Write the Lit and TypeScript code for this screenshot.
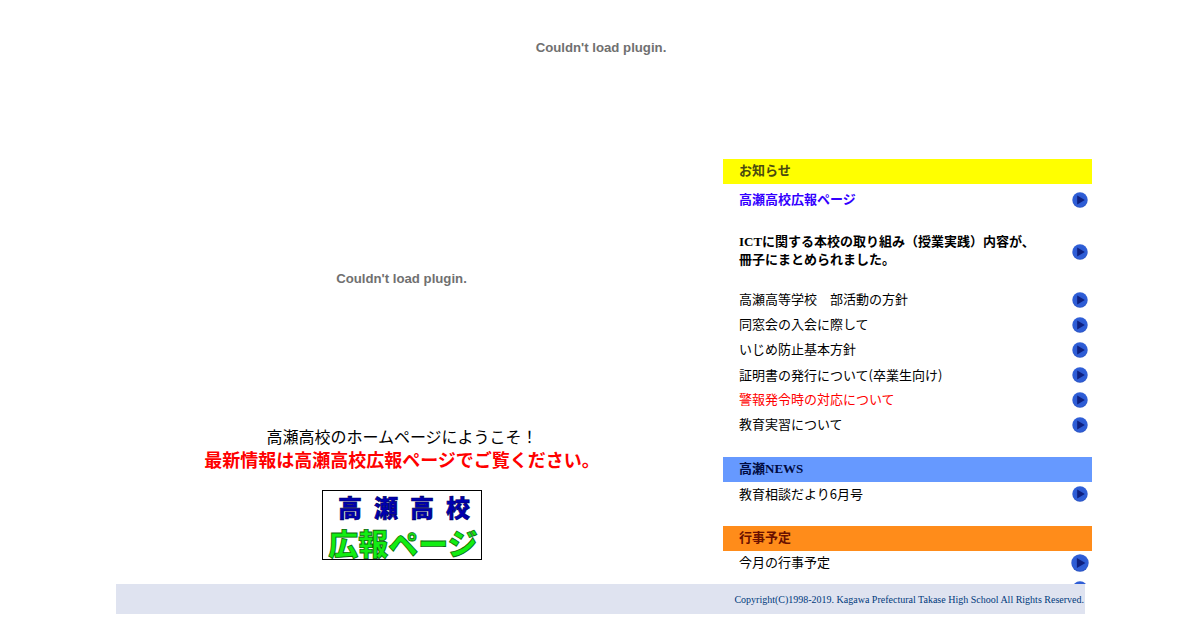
import { LitElement, html, css, svg } from "lit";
import { customElement } from "lit/decorators.js";

let uid = 0;
const arrow = (big = false) => {
  const id = `g${uid++}`;
  const s = big ? 18 : 16;
  return html`<svg class="arrow" width=${s} height=${s} viewBox="0 0 16 16" aria-hidden="true">
    ${svg`<defs><radialGradient id=${id} cx="50%" cy="45%" r="58%">
      <stop offset="0" stop-color="#2a56cc"/><stop offset="0.75" stop-color="#2f5fd8"/><stop offset="1" stop-color="#2a50ba"/>
    </radialGradient></defs>
    <circle cx="8" cy="8" r="7.7" fill="url(#${id})"/>
    <path d="M5.2 3.6 L12.8 8 L5.2 12.4 Z" fill="#0e2080"/>`}
  </svg>`;
};

@customElement("app-root")
export class AppRoot extends LitElement {
  static styles = css`
    :host { display: block; width: 1200px; height: 630px; overflow: hidden; background: #fff;
      font-family: "Liberation Serif", "Noto Sans CJK JP", serif; font-size: 13px; color: #000; }
    .page { display: flex; flex-direction: column; padding-left: 116px; }
    .plugin { display: flex; align-items: center; justify-content: center; box-sizing: border-box; padding-left: 1px;
      font-family: "Liberation Sans", sans-serif; font-weight: 700; font-size: 13.2px; color: #707070; }
    .top { width: 969px; height: 159px; align-items: flex-start; }
    .top span { margin-top: 40px; line-height: 16px; }
    .main { display: flex; gap: 37px; height: 425px; width: 976px; }
    .left { width: 570px; flex: none; display: flex; flex-direction: column; align-items: center; }
    .left .plugin { height: 238px; width: 100%; }
    .welcome { margin-top: 29px; font-size: 16px; line-height: 23px; text-align: center; padding-left: 2px; }
    .notice { margin-top: 1px; padding-left: 2px; font-size: 18px; font-weight: 700; color: #f00; line-height: 23px; text-align: center; }
    .banner { margin-top: 17px; margin-left: 2px; width: 160px; height: 70px; box-sizing: border-box; border: 1px solid #000;
      display: flex; flex-direction: column; align-items: center;
      font-family: "Noto Sans CJK JP", sans-serif; font-weight: 900; background: #fff; }
    .b1 { font-size: 24px; line-height: 32px; letter-spacing: 12px; margin: 0 -12px 0 4px; white-space: nowrap; color: #0000b0;
      -webkit-text-stroke: 0.6px #00005a; }
    .b2 { font-size: 30px; line-height: 34px; margin-top: 2px; margin-left: 2px; color: #12ee12; -webkit-text-stroke: 0.8px #0a6a0a; white-space: nowrap; }
    .right { width: 369px; flex: none; height: 425px; overflow: hidden; }
    .head { height: 25px; line-height: 24px; padding-left: 16px; font-weight: 700; }
    .yellow { background: #ffff00; color: #4a4a10; }
    .blue { background: #6699ff; color: #000a40; }
    .orange { background: #ff8c1a; color: #6a1000; }
    .row { display: flex; align-items: center; justify-content: space-between; box-sizing: border-box;
      height: 25px; padding: 0 4px 0 16px; line-height: 18px; }
    .row.first { margin-top: 3px; }
    .row.tall { height: 36px; margin-top: 22px; margin-bottom: 17px; }
    .row.tall span { margin-top: -2px; }
    .row.icon-only { justify-content: flex-end; }
    .sans { font-family: "Noto Sans CJK JP", "Liberation Sans", sans-serif; }
    .link { color: #3300ff; font-weight: 700; }
    .strong { font-weight: 700; }
    .red { color: #f00; }
    .arrow { flex: none; display: block; }
    .group { margin-bottom: 20px; }
    .group.news { margin-bottom: 19px; }
    .group.news span { margin-top: -1px; }
    .row.lift { padding-bottom: 1px; }
    .row.bigicon { padding-right: 3px; }
    .footer { width: 969px; height: 30px; background: #dfe3f0; color: #003a7c; font-size: 10px;
      display: flex; align-items: center; justify-content: flex-end; padding-right: 1px; box-sizing: border-box; }
  `;

  render() {
    const rows: [string, string][] = [
      ["高瀬高等学校　部活動の方針", ""],
      ["同窓会の入会に際して", ""],
      ["いじめ防止基本方針", ""],
      ["証明書の発行について(卒業生向け)", "sans"],
      ["警報発令時の対応について", "red"],
      ["教育実習について", ""],
    ];
    return html`<div class="page">
      <div class="plugin top"><span>Couldn't load plugin.</span></div>
      <div class="main">
        <div class="left">
          <div class="plugin"><span>Couldn't load plugin.</span></div>
          <div class="welcome">高瀬高校のホームページにようこそ！</div>
          <div class="notice">最新情報は高瀬高校広報ページでご覧ください。</div>
          <div class="banner">
            <div class="b1">高瀬高校</div>
            <div class="b2">広報ページ</div>
          </div>
        </div>
        <div class="right">
          <div class="group">
            <div class="head yellow">お知らせ</div>
            <div class="row first"><span class="link">高瀬高校広報ページ</span>${arrow()}</div>
            <div class="row tall"><span class="strong">ICTに関する本校の取り組み（授業実践）内容が、<br />冊子にまとめられました。</span>${arrow()}</div>
            ${rows.map(([t, c]) => html`<div class="row"><span class=${c}>${t}</span>${arrow()}</div>`)}
          </div>
          <div class="group news">
            <div class="head blue">高瀬NEWS</div>
            <div class="row lift"><span class="sans">教育相談だより6月号</span>${arrow()}</div>
          </div>
          <div class="group">
            <div class="head orange">行事予定</div>
            <div class="row bigicon lift"><span>今月の行事予定</span>${arrow(true)}</div>
            <div class="row icon-only">${arrow()}</div>
          </div>
        </div>
      </div>
      <div class="footer">Copyright(C)1998-2019. Kagawa Prefectural Takase High School All Rights Reserved.</div>
    </div>`;
  }
}
